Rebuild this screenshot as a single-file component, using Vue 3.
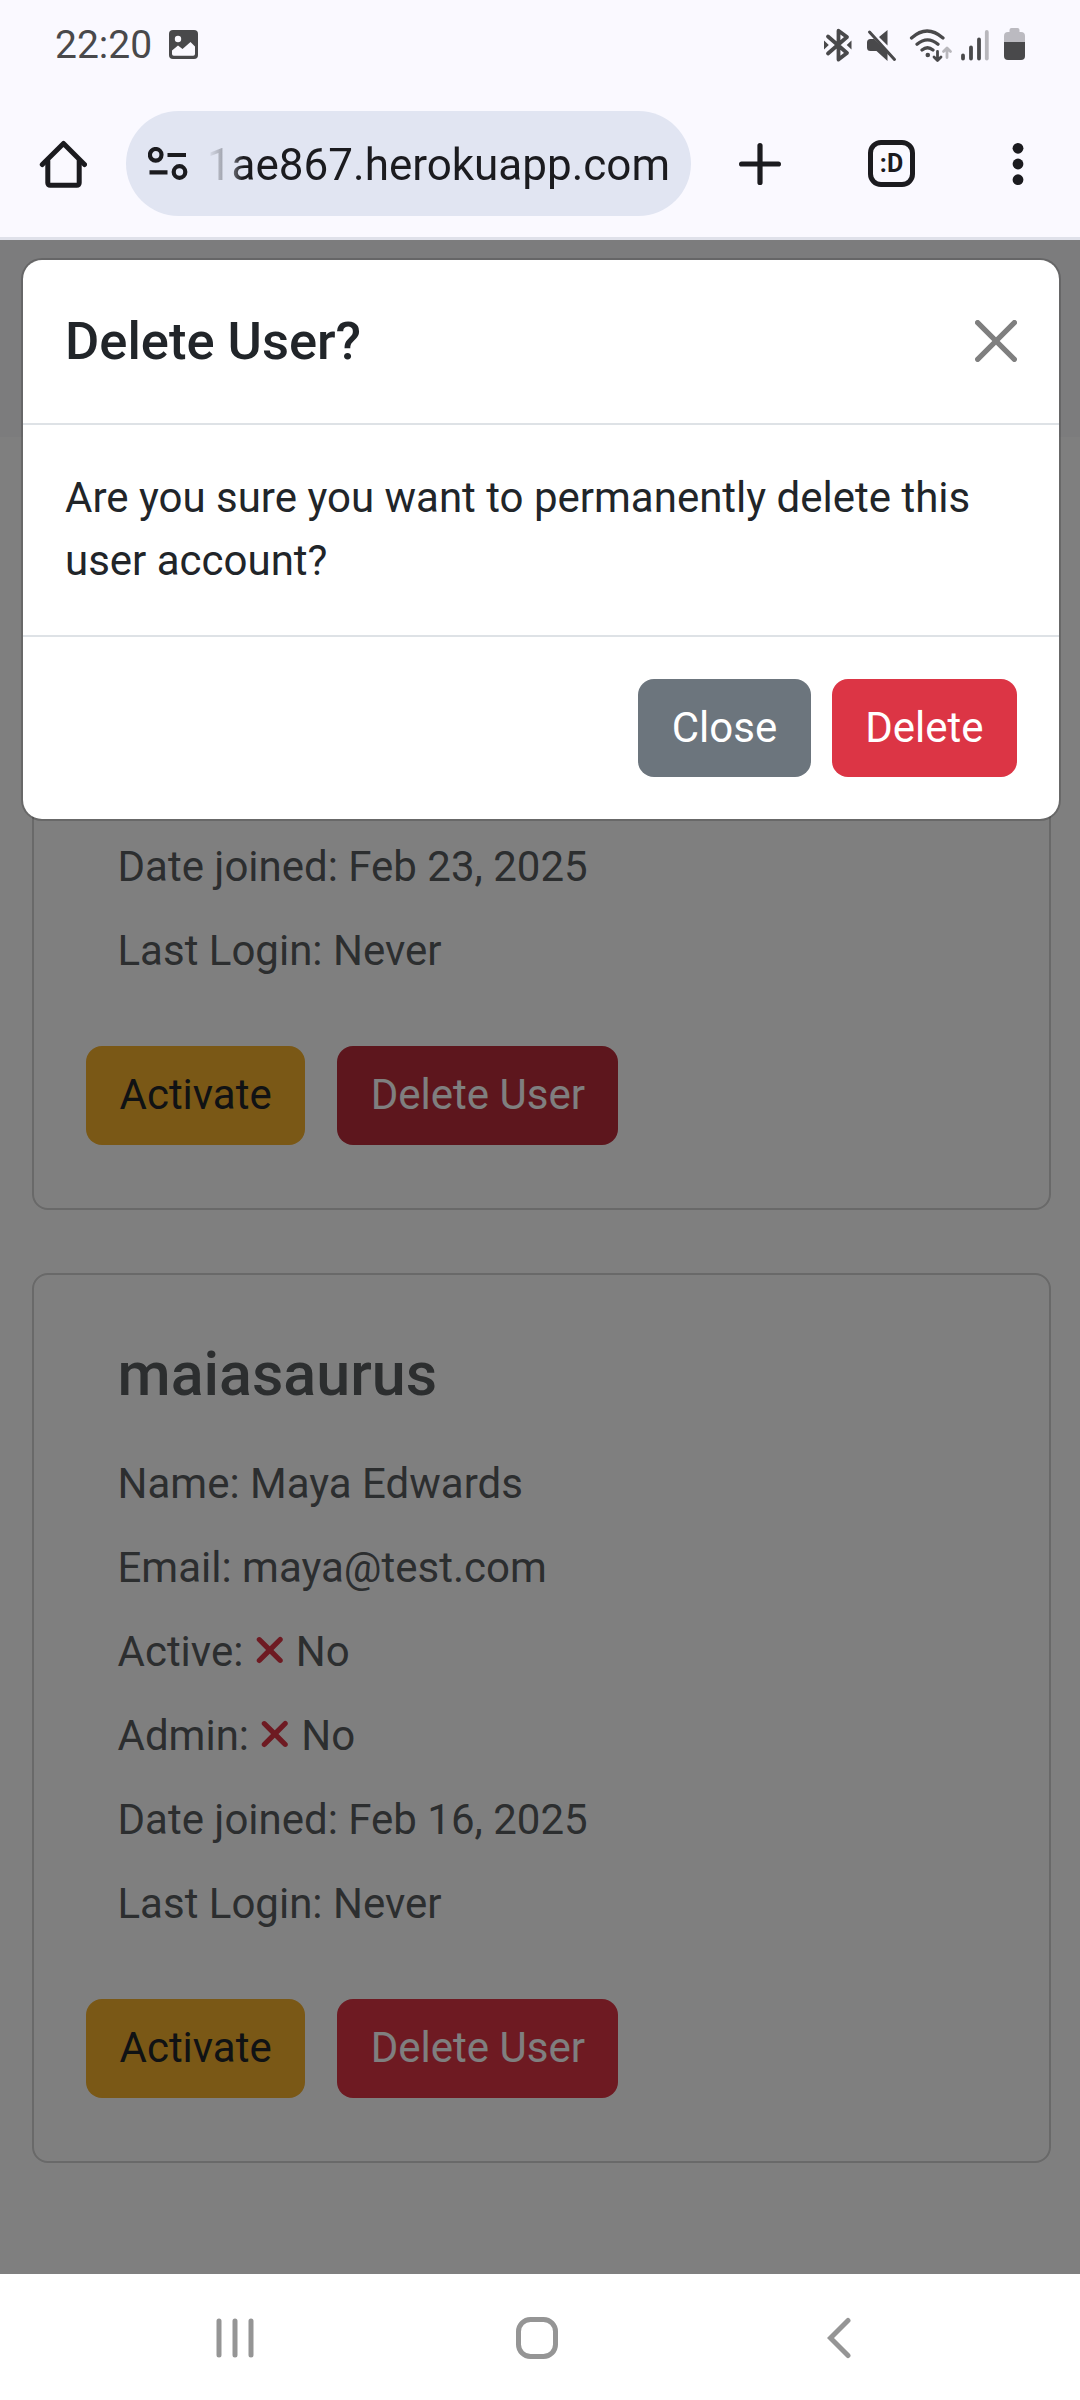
<script setup>
const users = [
  {
    id: 1,
    rows: [
      { label: 'Date joined:', value: 'Feb 23, 2025' },
      { label: 'Last Login:', value: 'Never' },
    ],
    pressed: true,
  },
  {
    id: 2,
    username: 'maiasaurus',
    rows: [
      { label: 'Name:', value: 'Maya Edwards' },
      { label: 'Email:', value: 'maya@test.com' },
      { label: 'Active:', value: 'No', cross: true },
      { label: 'Admin:', value: 'No', cross: true },
      { label: 'Date joined:', value: 'Feb 16, 2025' },
      { label: 'Last Login:', value: 'Never' },
    ],
  },
]
</script>

<template>
  <div class="screen">
    <header class="status">
      <span class="clock">22:20</span>
      <svg class="photo" width="29" height="29" viewBox="0 0 29 29">
        <rect width="29" height="29" rx="4" fill="#49494b" />
        <circle cx="9" cy="9" r="3.2" fill="#faf9ff" />
        <path d="M3 20.5 9 15.500l4.500 3.500L21.500 12 26 16.500V24a1.800 1.800 0 0 1-1.800 1.800H4.800A1.800 1.800 0 0 1 3 24z" fill="#faf9ff" />
      </svg>
      <svg class="indicators" width="204" height="36" viewBox="0 0 204 36">
        <g fill="none" stroke="#49494b" stroke-width="3.800" stroke-linecap="round" stroke-linejoin="round">
          <path d="M5 9.500 24 26 15.500 32.500V3.700L24 10 5 26.500" />
        </g>
        <path d="M1 13.500 5.800 18 1 22.500zM28.500 13.500 23.700 18l4.800 4.500z" fill="#49494b" />
        <path d="M44 15.500q0-3.500 3.500-3.500H51L64.500 25V34L53.500 24H47.500q-3.500 0-3.500-3.500zM64.500 3v15.500L56 10z" fill="#49494b" />
        <path d="M46.500 5 71.500 32.500" stroke="#49494b" stroke-width="3" stroke-linecap="round" />
        <g fill="none" stroke="#49494b" stroke-width="3.200" stroke-linecap="round">
          <path d="M88.500 11q15.500-14 31.500 0M94 17.300q10.500-9 21 0M99 23q5.500-4.500 11 0" />
          <path d="M114.500 24.500v8.500M111 30l3.500 3.500 3.500-3.500" stroke-width="2.800" stroke-linejoin="round" />
          <path d="M124 30.500v-9M120.500 24.500l3.500-3.500 3.500 3.500" stroke="#b8b7bc" stroke-width="2.800" stroke-linejoin="round" />
        </g>
        <circle cx="104.800" cy="28" r="2.300" fill="#49494b" />
        <g stroke="#49494b" stroke-width="3.800" stroke-linecap="round">
          <path d="M140 28.500v3M148 20.500v11M156 12.500v19" />
          <path d="M163.800 5v26.500" stroke="#b8b7bc" />
        </g>
        <path d="M181 17V9q0-4 4-4h1.500V3q0-2 2-2h6q2 0 2 2v2H198q4 0 4 4v8z" fill="#bbbac0" />
        <path d="M181 15h21v14q0 4-4 4h-13q-4 0-4-4z" fill="#49494b" />
      </svg>
    </header>

    <nav class="toolbar">
      <svg class="home" width="48" height="48" viewBox="0 0 48 48" fill="none" stroke="#1b1b1f" stroke-width="5" stroke-linecap="round" stroke-linejoin="round">
        <path d="M3.300 24.500 24.500 3.500l21 21" />
        <path d="M8.800 21v22a2.300 2.300 0 0 0 2.300 2.300h26.800a2.300 2.300 0 0 0 2.300-2.300V21" />
      </svg>
      <div class="address">
        <svg class="tune" width="40" height="34" viewBox="0 0 40 34" fill="none" stroke="#1b1b1f" stroke-width="4.200">
          <circle cx="7.700" cy="7.800" r="5.800" />
          <path d="M19.500 8H38M1.500 25.300H19.500" />
          <circle cx="31.500" cy="25" r="5.800" />
        </svg>
        <span class="url">1ae867.herokuapp.com</span>
      </div>
      <svg class="plus" width="42" height="42" viewBox="0 0 42 42" stroke="#1b1b1f" stroke-width="5.200" stroke-linecap="round">
        <path d="M21 2.600v36.800M2.600 21h36.800" />
      </svg>
      <span class="tabs">:D</span>
      <svg class="dots" width="12" height="44" viewBox="0 0 12 44" fill="#1b1b1f">
        <circle cx="6" cy="6.300" r="5.400" /><circle cx="6" cy="22" r="5.400" /><circle cx="6" cy="37.700" r="5.400" />
      </svg>
    </nav>

    <main class="page">
      <div class="band"></div>
      <div class="cards">
        <section v-for="u in users" :key="u.id" class="card">
          <h3 v-if="u.username">{{ u.username }}</h3>
          <p v-for="r in u.rows" :key="r.label">
            {{ r.label }}
            <svg v-if="r.cross" class="cross" viewBox="0 0 384 512"><path d="M342.600 150.600c12.500-12.500 12.500-32.800 0-45.300s-32.800-12.500-45.300 0L192 210.700 86.600 105.400c-12.500-12.500-32.800-12.500-45.300 0s-12.500 32.800 0 45.300L146.700 256 41.400 361.400c-12.500 12.500-12.500 32.800 0 45.300s32.800 12.500 45.300 0L192 301.300 297.400 406.600c12.500 12.500 32.800 12.500 45.300 0s12.500-32.800 0-45.300L237.300 256 342.600 150.600z" /></svg>
            {{ r.value }}
          </p>
          <div class="actions">
            <button class="btn warning">Activate</button>
            <button class="btn danger" :class="{ pressed: u.pressed }">Delete User</button>
          </div>
        </section>
      </div>
      <div class="backdrop">
        <div class="modal">
          <div class="modal-header">
            <h5>Delete User?</h5>
            <svg width="42" height="42" viewBox="0 0 16 16" fill="#7f7f7f"><path d="M.293.293a1 1 0 0 1 1.414 0L8 6.586 14.293.293a1 1 0 1 1 1.414 1.414L9.414 8l6.293 6.293a1 1 0 0 1-1.414 1.414L8 9.414l-6.293 6.293a1 1 0 0 1-1.414-1.414L6.586 8 .293 1.707a1 1 0 0 1 0-1.414z" /></svg>
          </div>
          <div class="modal-body">Are you sure you want to permanently delete this user account?</div>
          <div class="modal-footer">
            <button class="btn secondary">Close</button>
            <button class="btn danger">Delete</button>
          </div>
        </div>
      </div>
    </main>

    <footer class="system">
      <svg class="recents" width="38" height="42" viewBox="0 0 38 42" stroke="#959595" stroke-width="5" stroke-linecap="round"><path d="M3 4v34M19 4v34M35 4v34" /></svg>
      <svg class="circle" width="42" height="42" viewBox="0 0 42 42" fill="none" stroke="#959595" stroke-width="5"><rect x="2.500" y="2.500" width="37" height="37" rx="12" /></svg>
      <svg class="back" width="24" height="42" viewBox="0 0 24 42" fill="none" stroke="#959595" stroke-width="5" stroke-linecap="round"><path d="M21 3.500 3.500 21 21 38.500" /></svg>
    </footer>
  </div>
</template>

<style>
body { margin: 0; }
</style>

<style scoped>
.screen {
  width: 1080px;
  height: 2400px;
  display: flex;
  flex-direction: column;
  overflow: hidden;
  background: #faf9ff;
  font-family: Roboto, "Liberation Sans", sans-serif;
  color: #212529;
}
svg { display: block; flex: none; }
.status {
  height: 89px;
  box-sizing: border-box;
  display: flex;
  align-items: center;
  padding: 0 53px 0 55px;
}
.clock { font-size: 39px; color: #49494b; width: 114px; }
.indicators { margin-left: auto; }
.toolbar {
  height: 151px;
  box-sizing: border-box;
  border-bottom: 3px solid #dfe1ea;
  display: flex;
  align-items: center;
  padding: 1px 56.500px 0 39px;
}
.address {
  width: 565px;
  height: 105px;
  margin-left: 39px;
  border-radius: 53px;
  background: #e1e5f2;
  display: flex;
  align-items: center;
  box-sizing: border-box;
  padding: 0 21px 0 22px;
}
.url {
  margin: 3px 0 0 auto;
  font-size: 44px;
  white-space: nowrap;
  color: transparent;
  background: linear-gradient(90deg, #1b1b1f00 0, #1b1b1f70 22px, #1b1b1f 36px);
  background-clip: text;
}
.plus { margin-left: 47.500px; }
.tabs {
  width: 47px;
  height: 47px;
  margin-left: 87.500px;
  box-sizing: border-box;
  border: 5px solid #1b1b1f;
  border-radius: 13px;
  font-size: 25px;
  font-weight: 700;
  line-height: 37px;
  text-align: center;
  color: #1b1b1f;
}
.dots { margin-left: auto; }
.page {
  height: 2034px;
  position: relative;
  overflow: hidden;
  background: #fff;
}
.band { height: 197px; background: #f8f9fa; }
.cards {
  margin: -117px 29px 0 32px;
  display: flex;
  flex-direction: column;
  gap: 63px;
}
.card {
  height: 890px;
  box-sizing: border-box;
  border: 2px solid #d2d2d2;
  border-radius: 16px;
  background: #fff;
  padding: 0 52px 63px;
  display: flex;
  flex-direction: column;
  justify-content: flex-end;
  color: #595c5f;
}
.card h3 {
  margin: 0 31.500px 41px;
  font-size: 61px;
  line-height: 73px;
  font-weight: 500;
}
.card p {
  margin: 0 31.500px 21px;
  font-size: 42px;
  line-height: 63px;
}
.cross {
  display: inline-block;
  width: 31.500px;
  height: 42px;
  vertical-align: -5px;
  fill: #dc3545;
}
.actions { display: flex; gap: 32px; margin-top: 43px; }
.btn {
  border: 0;
  height: 98px;
  padding: 0 33.500px;
  border-radius: 16px;
  font: 42px/98px Roboto, "Liberation Sans", sans-serif;
  color: #fff;
}
.actions .btn { height: 99px; padding: 0 33.500px 2px; line-height: 97px; }
.warning { background: #f5b02c; color: #212529; }
.danger { background: #dc3545; }
.danger.pressed { background: #bb2d3b; }
.secondary { background: #6c757d; }
.backdrop {
  position: absolute;
  inset: 0;
  background: rgba(0, 0, 0, 0.5);
  padding: 18px 19px 0 21px;
}
.modal {
  border: 2px solid rgba(0, 0, 0, 0.175);
  border-radius: 21px;
  background: #fff;
  background-clip: padding-box;
}
.modal-header {
  height: 162px;
  padding: 0 42px 1px;
  border-bottom: 2px solid #dee2e6;
  display: flex;
  align-items: center;
  justify-content: space-between;
}
.modal-header h5 { margin: 0; font-size: 52.500px; font-weight: 500; line-height: 79px; }
.modal-body { padding: 41px 42px 43px; font-size: 42px; line-height: 63px; }
.modal-footer {
  border-top: 2px solid #dee2e6;
  padding: 42px;
  display: flex;
  justify-content: flex-end;
  gap: 21px;
}
.system { flex: 1; display: flex; align-items: center; background: #fff; padding: 2px 0 0 216px; }
.circle { margin-left: 262px; }
.back { margin-left: 269px; }
</style>
